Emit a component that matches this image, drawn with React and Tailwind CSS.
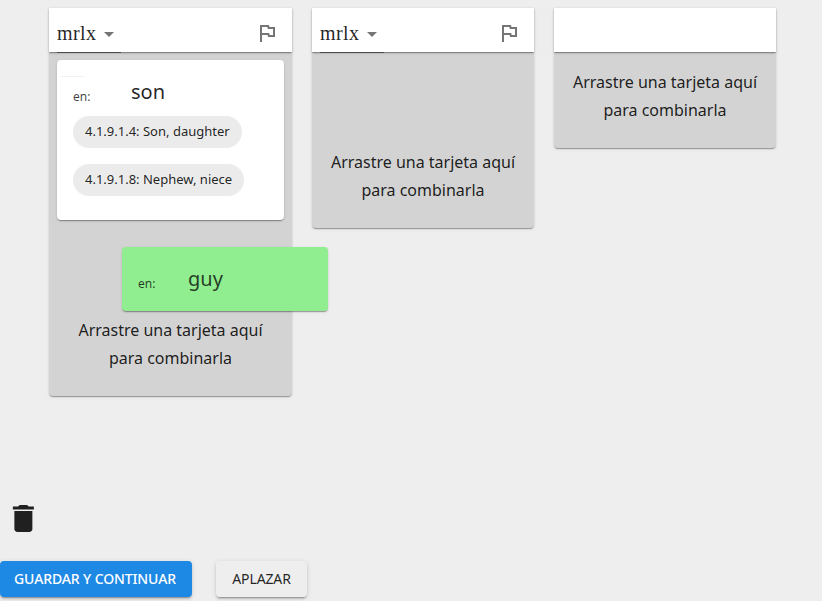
const paper =
  "shadow-[0px_2px_1px_-1px_rgba(0,0,0,0.2),0px_1px_1px_0px_rgba(0,0,0,0.14),0px_1px_3px_0px_rgba(0,0,0,0.12)]";
const raised =
  "shadow-[0px_3px_1px_-2px_rgba(0,0,0,0.2),0px_2px_2px_0px_rgba(0,0,0,0.14),0px_1px_5px_0px_rgba(0,0,0,0.12)]";

function Header({ vern }) {
  return (
    <div className={`flex h-11 shrink-0 items-start justify-between bg-white pl-2 ${paper}`}>
      {vern && (
        <>
          <div className="flex h-[45px] w-16 items-start border-b border-[#4d4d4d] pt-[13px]">
            <span className="w-10 font-['Liberation_Serif',serif] text-[20px] leading-6 tracking-[0.4px] text-black/87">{vern}</span>
            <svg className="mt-px size-6 shrink-0 fill-black/54" viewBox="0 0 24 24">
              <path d="M7 10l5 5 5-5z" />
            </svg>
          </div>
          <svg className="mt-[13px] mr-[13px] size-6 fill-black/54" viewBox="0 0 24 24">
            <path d="m12.36 6 .4 2H18v6h-3.36l-.4-2H7V6h5.36M14 4H5v17h2v-7h5.6l.4 2h7V6h-5.6L14 4z" />
          </svg>
        </>
      )}
    </div>
  );
}

function Column({ vern, size, children }) {
  return (
    <section className={`relative flex flex-col rounded-b bg-[#d3d3d3] ${size} ${paper}`}>
      <Header vern={vern} />
      {children}
      <p className="mt-auto mb-6 text-center text-[16px] leading-7">
        Arrastre una tarjeta aquí
        <br />
        para combinarla
      </p>
    </section>
  );
}

function Gloss({ lang, text, labelWidth }) {
  return (
    <div className="flex items-start">
      <span className={`pt-2 text-[12px] leading-[26px] text-black/75 ${labelWidth}`}>{lang}</span>
      <span className="text-[20px] leading-8">{text}</span>
    </div>
  );
}

function Chip({ label }) {
  return (
    <span className="flex h-8 w-fit items-center rounded-full bg-[#ebebeb] px-3 text-[13px] whitespace-nowrap">
      {label}
    </span>
  );
}

export default function App() {
  return (
    <main className="flex h-[601px] w-[822px] flex-col overflow-hidden bg-[#eeeeee] font-['Noto_Sans',sans-serif] text-black/87">
      <div className="flex h-[500px] items-start gap-5 pt-2 pl-[49px]">
        <Column vern="mrlx" size="h-[388px] w-[243px]">
          <article className={`mx-2 mt-2 h-40 rounded bg-white px-4 pt-4 ${paper}`}>
            <div className="-ml-3 h-px w-6 bg-[#f2f2f2]" />
            <div className="-mt-px h-10">
              <Gloss lang="en:" text="son" labelWidth="w-[58px]" />
            </div>
            <div className="flex flex-col gap-4">
              <Chip label="4.1.9.1.4: Son, daughter" />
              <Chip label="4.1.9.1.8: Nephew, niece" />
            </div>
          </article>
          <article className={`absolute top-[239px] left-[73px] z-10 h-16 w-[206px] rounded bg-[#90ee90] px-4 pt-4 text-black/75 ${paper}`}>
            <Gloss lang="en:" text="guy" labelWidth="w-[50px]" />
          </article>
        </Column>
        <Column vern="mrlx" size="h-[220px] w-[222px]" />
        <Column size="h-[140px] w-[222px]" />
      </div>
      <svg className="ml-[5px] size-9 shrink-0 fill-[#202020]" viewBox="-0.25 -0.33 24 24">
        <path d="M6 19c0 1.100.9 2 2 2h8c1.100 0 2-.9 2-2V7H6v12zM19 4h-3.500l-1-1h-5l-1 1H5v2h14V4z" />
      </svg>
      <div className="mt-[25px] flex gap-6 text-[14px] tracking-[-0.12px]">
        <button className={`h-9 w-48 rounded bg-[#1e88e5] pr-0.5 pb-0.5 text-center font-medium whitespace-nowrap text-white ${raised}`}>
          GUARDAR Y CONTINUAR
        </button>
        <button className={`h-9 w-[91px] rounded bg-[#eeeeee] pb-0.5 text-center ${raised}`}>APLAZAR</button>
      </div>
    </main>
  );
}
